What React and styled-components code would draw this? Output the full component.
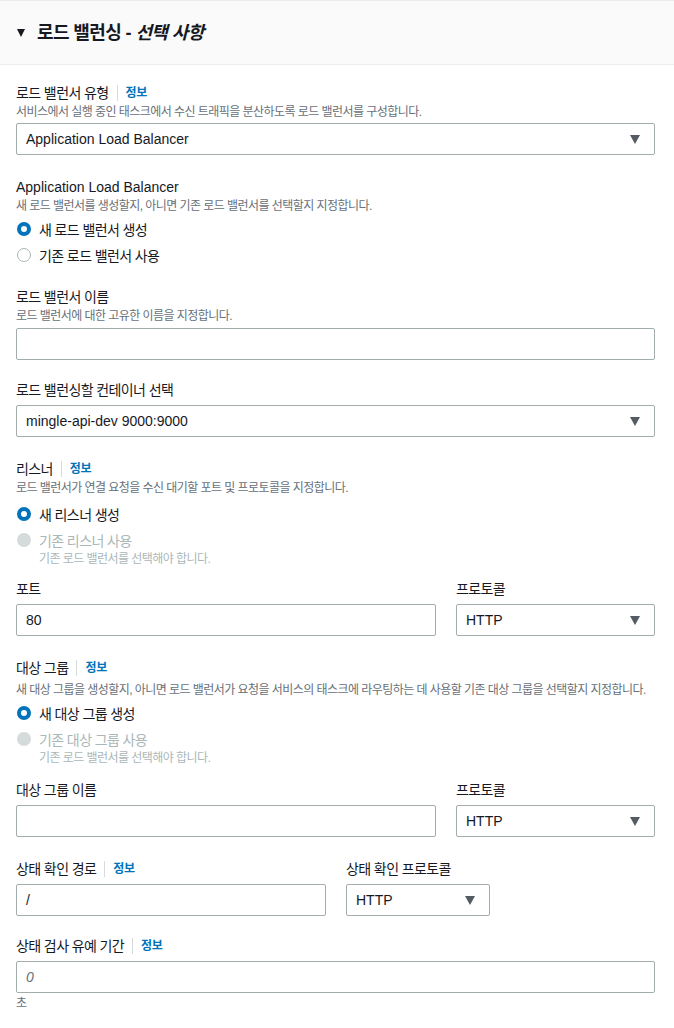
import React from 'react';
import styled, { createGlobalStyle } from 'styled-components';

const GlobalStyle = createGlobalStyle`
    body {
        margin: 0;
        background: #ffffff;
        font-family: "Liberation Sans", "Noto Sans CJK KR", sans-serif;
        color: #16191f;
    }
`

const Panel = styled.section`
    width: 674px;
    min-height: 1028px;
    background: #ffffff;
`

const Header = styled.div`
    height: 63px;
    border-top: 1px solid #eaeded;
    border-bottom: 1px solid #eaeded;
    background: #fafafa;
    display: flex;
    align-items: center;
    padding-left: 17px;
    gap: 12px;
`

const Caret = styled.span`
    width: 0;
    height: 0;
    border-left: 4px solid transparent;
    border-right: 4px solid transparent;
    border-top: 8px solid #16191f;
`

const Title = styled.h2`
    margin: 0;
    font-size: 18px;
    font-weight: 700;
    line-height: 24px;
    letter-spacing: -0.6px;
    em {
        font-style: italic;
    }
`

const Body = styled.div`
    padding: 17px 19px 20px 16px;
    display: flex;
    flex-direction: column;
`

const Field = styled.div`
    display: flex;
    flex-direction: column;
    margin-top: ${p => p.$top || 0}px;
`

const Label = styled.div`
    display: flex;
    align-items: center;
    font-size: 14px;
    line-height: 22px;
    color: #16191f;
    letter-spacing: ${p => p.$latin ? '0' : '-0.6px'};
`

const Divider = styled.span`
    width: 1px;
    height: 16px;
    background: #d5dbdb;
    margin: 0 8px 0 8px;
`

const Info = styled.a`
    font-size: 12px;
    font-weight: 700;
    color: #0073bb;
    text-decoration: none;
    letter-spacing: -0.3px;
`

const Desc = styled.div`
    font-size: 12px;
    line-height: 16px;
    color: #687078;
    letter-spacing: -0.55px;
    white-space: nowrap;
    margin-top: ${p => p.$top || 0}px;
`

const Control = styled.div`
    box-sizing: border-box;
    height: 32px;
    margin-top: ${p => p.$top || 4}px;
    width: 100%;
    border: 1px solid #a3adae;
    border-radius: 2px;
    display: flex;
    align-items: center;
    justify-content: space-between;
    padding: 0 14px 0 9px;
    font-size: 14px;
    color: ${p => p.$placeholder ? '#687078' : '#16191f'};
    font-style: ${p => p.$placeholder ? 'italic' : 'normal'};
    background: #ffffff;
`

const Arrow = styled.span`
    width: 0;
    height: 0;
    border-left: 5px solid transparent;
    border-right: 5px solid transparent;
    border-top: 9px solid #545b64;
`

const RadioGroup = styled.div`
    display: flex;
    flex-direction: column;
    gap: 4px;
    margin-top: ${p => p.$top || 4}px;
`

const RadioRow = styled.div`
    display: flex;
    flex-direction: column;
`

const RadioLine = styled.label`
    display: flex;
    align-items: center;
    gap: 8px;
    height: 22px;
    font-size: 14px;
    letter-spacing: -0.6px;
    color: ${p => p.$disabled ? '#aab7b8' : '#16191f'};
`

const Dot = styled.span`
    box-sizing: border-box;
    flex: none;
    width: 14px;
    height: 14px;
    border-radius: 50%;
    margin-left: 1px;
    background: ${p => p.$disabled ? '#d5dbdb' : '#ffffff'};
    border: ${p => p.$checked ? '4px solid #0073bb' : p.$disabled ? 'none' : '1px solid #aab7b8'};
`

const SubDesc = styled.div`
    font-size: 12px;
    line-height: 16px;
    color: #aab7b8;
    letter-spacing: -0.55px;
    padding-left: 23px;
`

const Row = styled.div`
    display: grid;
    grid-template-columns: ${p => p.$cols};
    gap: 20px;
    margin-top: ${p => p.$top || 0}px;
`

const Unit = styled.div`
    font-size: 12px;
    line-height: 16px;
    color: #687078;
    margin-top: 2px;
`

function Radio({ checked, disabled, children, note }) {
    return (
        <RadioRow>
            <RadioLine $disabled={disabled}>
                <Dot $checked={checked} $disabled={disabled} />
                {children}
            </RadioLine>
            {note && <SubDesc>{note}</SubDesc>}
        </RadioRow>
    );
}

function FieldLabel({ children, info, latin }) {
    return (
        <Label $latin={latin}>
            {children}
            {info && <><Divider /><Info>정보</Info></>}
        </Label>
    );
}

export default function App() {
    return (
        <Panel>
            <GlobalStyle />
            <Header>
                <Caret />
                <Title>로드 밸런싱 - <em>선택 사항</em></Title>
            </Header>
            <Body>
                <Field>
                    <FieldLabel info>로드 밸런서 유형</FieldLabel>
                    <Desc>서비스에서 실행 중인 태스크에서 수신 트래픽을 분산하도록 로드 밸런서를 구성합니다.</Desc>
                    <Control $top={3}>Application Load Balancer<Arrow /></Control>
                </Field>

                <Field $top={21}>
                    <FieldLabel latin>Application Load Balancer</FieldLabel>
                    <Desc>새 로드 밸런서를 생성할지, 아니면 기존 로드 밸런서를 선택할지 지정합니다.</Desc>
                    <RadioGroup>
                        <Radio checked>새 로드 밸런서 생성</Radio>
                        <Radio>기존 로드 밸런서 사용</Radio>
                    </RadioGroup>
                </Field>

                <Field $top={20}>
                    <FieldLabel>로드 밸런서 이름</FieldLabel>
                    <Desc>로드 밸런서에 대한 고유한 이름을 지정합니다.</Desc>
                    <Control />
                </Field>

                <Field $top={19}>
                    <FieldLabel>로드 밸런싱할 컨테이너 선택</FieldLabel>
                    <Control>mingle-api-dev 9000:9000<Arrow /></Control>
                </Field>

                <Field $top={21}>
                    <FieldLabel info>리스너</FieldLabel>
                    <Desc>로드 밸런서가 연결 요청을 수신 대기할 포트 및 프로토콜을 지정합니다.</Desc>
                    <RadioGroup $top={7}>
                        <Radio checked>새 리스너 생성</Radio>
                        <Radio disabled note="기존 로드 밸런서를 선택해야 합니다.">기존 리스너 사용</Radio>
                    </RadioGroup>
                </Field>

                <Row $cols="1fr 199px" $top={11}>
                    <Field>
                        <FieldLabel>포트</FieldLabel>
                        <Control>80</Control>
                    </Field>
                    <Field>
                        <FieldLabel>프로토콜</FieldLabel>
                        <Control>HTTP<Arrow /></Control>
                    </Field>
                </Row>

                <Field $top={21}>
                    <FieldLabel info>대상 그룹</FieldLabel>
                    <Desc $top={3}>새 대상 그룹을 생성할지, 아니면 로드 밸런서가 요청을 서비스의 태스크에 라우팅하는 데 사용할 기존 대상 그룹을 선택할지 지정합니다.</Desc>
                    <RadioGroup $top={4}>
                        <Radio checked>새 대상 그룹 생성</Radio>
                        <Radio disabled note="기존 로드 밸런서를 선택해야 합니다.">기존 대상 그룹 사용</Radio>
                    </RadioGroup>
                </Field>

                <Row $cols="1fr 199px" $top={13}>
                    <Field>
                        <FieldLabel>대상 그룹 이름</FieldLabel>
                        <Control />
                    </Field>
                    <Field>
                        <FieldLabel>프로토콜</FieldLabel>
                        <Control>HTTP<Arrow /></Control>
                    </Field>
                </Row>

                <Row $cols="310px 144px" $top={21}>
                    <Field>
                        <FieldLabel info>상태 확인 경로</FieldLabel>
                        <Control>/</Control>
                    </Field>
                    <Field>
                        <FieldLabel>상태 확인 프로토콜</FieldLabel>
                        <Control>HTTP<Arrow /></Control>
                    </Field>
                </Row>

                <Field $top={19}>
                    <FieldLabel info>상태 검사 유예 기간</FieldLabel>
                    <Control $placeholder>0</Control>
                    <Unit>초</Unit>
                </Field>
            </Body>
        </Panel>
    );
}
